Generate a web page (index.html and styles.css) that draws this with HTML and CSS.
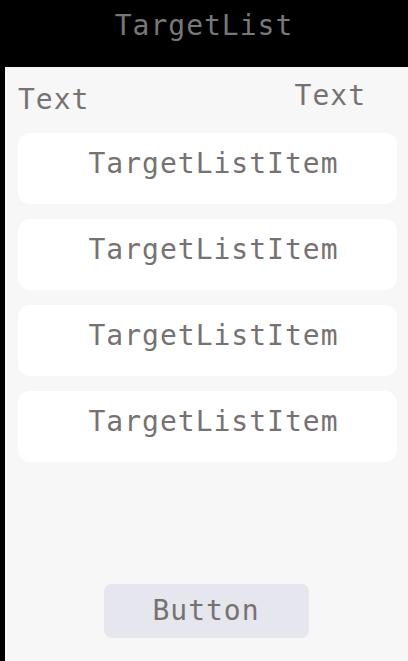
FILE: index.html
```html
<!DOCTYPE html>
<html>
<head>
<meta charset="utf-8">
<link rel="stylesheet" href="styles.css">
</head>
<body>
<header class="header"><span class="title">TargetList</span></header>
<main class="main">
  <div class="row">
    <span class="label label-left">Text</span>
    <span class="label label-right">Text</span>
  </div>
  <div class="list">
    <div class="card"><span>TargetListItem</span></div>
    <div class="card"><span>TargetListItem</span></div>
    <div class="card"><span>TargetListItem</span></div>
    <div class="card"><span>TargetListItem</span></div>
  </div>
  <button class="button">Button</button>
</main>
</body>
</html>
```
FILE: styles.css
```css
html, body {
  margin: 0;
  padding: 0;
  background: #000;
}
body {
  width: 408px;
  height: 661px;
  overflow: hidden;
  font-family: "DejaVu Sans Mono", "Liberation Mono", monospace;
  font-size: 28px;
  letter-spacing: 1px;
  color: #767272;
}
.header {
  height: 67px;
  display: flex;
  justify-content: center;
  align-items: flex-start;
  box-sizing: border-box;
  padding-top: 9px;
}
.title {
  color: #7a7777;
  line-height: 34px;
}
.main {
  margin-left: 5px;
  height: 594px;
  box-sizing: border-box;
  background: #f7f7f7;
  display: flex;
  flex-direction: column;
  padding: 12px 11px 23px 13px;
}
.row {
  display: flex;
  justify-content: space-between;
  height: 54px;
}
.label {
  line-height: 34px;
}
.label-left {
  padding-left: 0;
  padding-top: 4px;
}
.label-right {
  padding-right: 31px;
}
.list {
  display: flex;
  flex-direction: column;
  gap: 15px;
}
.card {
  height: 71px;
  background: #fff;
  border-radius: 12px;
  display: flex;
  justify-content: center;
  align-items: center;
  padding-left: 12px;
  padding-bottom: 10px;
  box-sizing: border-box;
}
.button {
  margin-top: auto;
  align-self: center;
  width: 205px;
  height: 54px;
  margin-left: -3px;
  border: none;
  border-radius: 8px;
  background: #e6e6ee;
  font-family: inherit;
  font-size: 28px;
  letter-spacing: 1px;
  color: #767272;
  padding: 0 0 2px 0;
}
```
